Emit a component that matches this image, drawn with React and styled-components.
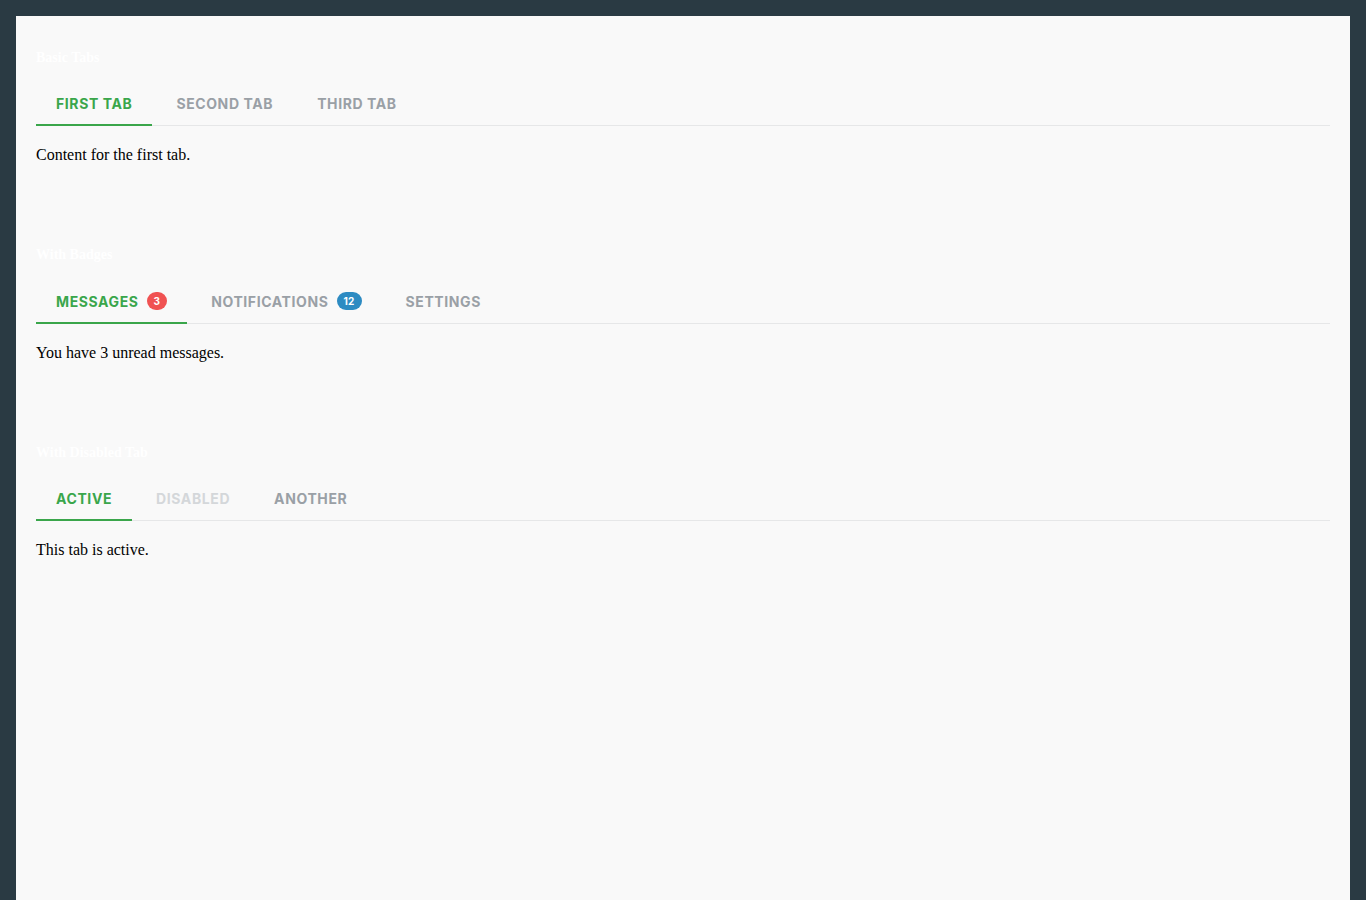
import React, { useState } from "react";
import styled, { createGlobalStyle } from "styled-components";

const Global = createGlobalStyle`
  html, body { margin: 0; padding: 0; }
  body {
    background: #2a3a43;
    font-family: "Liberation Serif", "Times New Roman", serif;
    padding: 16px 16px 0 16px;
    min-height: 900px;
    box-sizing: border-box;
  }
`;

const Panel = styled.div`
  background: #f9f9f9;
  min-height: 884px;
  padding: 20px;
  box-sizing: border-box;
`;

const Section = styled.section`
  margin-bottom: 83px;
`;

const Heading = styled.h3`
  margin: 14px 0 17px;
  font-family: "Liberation Serif", "Times New Roman", serif;
  font-size: 14px;
  font-weight: 700;
  color: #ffffff;
  line-height: 16px;
`;

const TabBar = styled.div`
  display: flex;
  gap: 4px;
  border-bottom: 1px solid #e6e7e8;
`;

const Tab = styled.button`
  display: flex;
  align-items: center;
  gap: 8px;
  padding: 12px 20px;
  margin-bottom: -1px;
  border: none;
  border-bottom: 2px solid ${(p) => (p.$active ? "#3aa64b" : "transparent")};
  background: transparent;
  font-family: Inter, "Helvetica Neue", Arial, sans-serif;
  font-size: 14px;
  line-height: 17px;
  font-weight: 700;
  letter-spacing: 0.6px;
  text-transform: uppercase;
  color: ${(p) => (p.$active ? "#3aa64b" : p.disabled ? "#d4d7da" : "#9aa0a6")};
  cursor: ${(p) => (p.disabled ? "default" : "pointer")};
`;

const Badge = styled.span`
  display: inline-flex;
  align-items: center;
  justify-content: center;
  min-width: 19px;
  height: 18px;
  padding: 0 7px;
  box-sizing: border-box;
  border-radius: 10px;
  background: ${(p) => p.$color};
  color: #fff;
  font-size: 10px;
  font-weight: 700;
  letter-spacing: 0.2px;
  line-height: 1;
`;

const Content = styled.div`
  padding-top: 20px;
  font-size: 16px;
  color: #000;
  line-height: 18px;
`;

function TabGroup({ title, tabs, initial }) {
  const [active, setActive] = useState(initial);
  const current = tabs.find((t) => t.id === active);
  return (
    <Section>
      <Heading>{title}</Heading>
      <TabBar>
        {tabs.map((t) => (
          <Tab
            key={t.id}
            $active={t.id === active}
            disabled={t.disabled}
            onClick={() => !t.disabled && setActive(t.id)}
          >
            {t.label}
            {t.badge && <Badge $color={t.badgeColor}>{t.badge}</Badge>}
          </Tab>
        ))}
      </TabBar>
      <Content>{current.content}</Content>
    </Section>
  );
}

export default function App() {
  return (
    <>
      <Global />
      <Panel>
        <TabGroup
          title="Basic Tabs"
          initial="a"
          tabs={[
            { id: "a", label: "First Tab", content: "Content for the first tab." },
            { id: "b", label: "Second Tab", content: "Content for the second tab." },
            { id: "c", label: "Third Tab", content: "Content for the third tab." },
          ]}
        />
        <TabGroup
          title="With Badges"
          initial="m"
          tabs={[
            { id: "m", label: "Messages", badge: "3", badgeColor: "#f05252", content: "You have 3 unread messages." },
            { id: "n", label: "Notifications", badge: "12", badgeColor: "#2d8bc2", content: "You have 12 notifications." },
            { id: "s", label: "Settings", content: "Settings panel." },
          ]}
        />
        <TabGroup
          title="With Disabled Tab"
          initial="x"
          tabs={[
            { id: "x", label: "Active", content: "This tab is active." },
            { id: "y", label: "Disabled", disabled: true, content: "" },
            { id: "z", label: "Another", content: "Another tab." },
          ]}
        />
      </Panel>
    </>
  );
}
